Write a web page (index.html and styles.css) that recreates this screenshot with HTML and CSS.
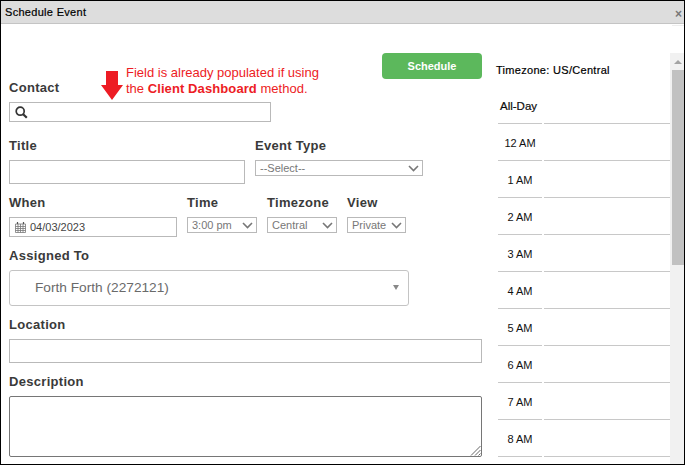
FILE: index.html
```html
<!DOCTYPE html>
<html lang="en">
<head>
<meta charset="utf-8">
<title>Schedule Event</title>
<link rel="stylesheet" href="styles.css">
</head>
<body>
<div class="dialog">
  <header class="titlebar">
    <span class="title">Schedule Event</span>
    <span class="close">×</span>
  </header>
  <div class="body">
    <span class="mark"></span>
    <form class="form">
      <div class="actions"><button type="button" class="btn">Schedule</button></div>
      <div class="contact">
        <label class="lbl">Contact</label>
        <div class="search">
          <svg class="search-ic" width="13" height="13" viewBox="0 0 13 13"><circle cx="5.200" cy="5.200" r="4" fill="none" stroke="#333" stroke-width="1.700"/><path d="M8.200 8.200l3.600 3.600" stroke="#333" stroke-width="2.200"/></svg>
        </div>
        <div class="note">
          <svg class="arrow" width="22" height="29" viewBox="0 0 22 29"><path d="M5 0h12v14h5L11 29 0 14h5z" fill="#ed1c24"/></svg>
          <p class="note-text">Field is already populated if using<br>the <b>Client Dashboard</b> method.</p>
        </div>
      </div>
      <div class="row row-title">
        <div class="f-title"><label class="lbl">Title</label><div class="input h24"></div></div>
        <div class="f-type"><label class="lbl">Event Type</label><div class="sel w168">--Select--<svg class="chev" width="11" height="7" viewBox="0 0 11 7"><path d="M1 1l4.500 4.500L10 1" fill="none" stroke="#777" stroke-width="1.600"/></svg></div></div>
      </div>
      <div class="row row-when">
        <div class="f-when"><label class="lbl">When</label>
          <div class="input date">
            <svg width="11" height="11" viewBox="0 0 11 11"><path d="M.5 2h10v8.500H.5zM.5 4.500h10M.5 6.500h10M.5 8.500h10M3 2v8.500M5.500 2v8.500M8 2v8.500" fill="none" stroke="#777" stroke-width=".8"/><path d="M2.500 0v2M8.500 0v2" stroke="#555" stroke-width="1.200"/></svg>
            <span>04/03/2023</span>
          </div>
        </div>
        <div class="f-time"><label class="lbl">Time</label><div class="sel w70">3:00 pm<svg class="chev" width="11" height="7" viewBox="0 0 11 7"><path d="M1 1l4.500 4.500L10 1" fill="none" stroke="#777" stroke-width="1.600"/></svg></div></div>
        <div class="f-tz"><label class="lbl">Timezone</label><div class="sel w70">Central<svg class="chev" width="11" height="7" viewBox="0 0 11 7"><path d="M1 1l4.500 4.500L10 1" fill="none" stroke="#777" stroke-width="1.600"/></svg></div></div>
        <div class="f-view"><label class="lbl">View</label><div class="sel w59">Private<svg class="chev" width="11" height="7" viewBox="0 0 11 7"><path d="M1 1l4.500 4.500L10 1" fill="none" stroke="#777" stroke-width="1.600"/></svg></div></div>
      </div>
      <div class="f-assign">
        <label class="lbl">Assigned To</label>
        <div class="assign"><span>Forth Forth (2272121)</span><i class="caret"></i></div>
      </div>
      <div class="f-loc"><label class="lbl">Location</label><div class="input h24 full"></div></div>
      <div class="f-desc"><label class="lbl">Description</label>
        <div class="area">
          <svg class="grip" width="11" height="11" viewBox="0 0 11 11"><path d="M1 10.500L10.500 1M5 10.500L10.500 5M8.500 10.500l2-2" stroke="#666" stroke-width="1"/></svg>
        </div>
      </div>
    </form>
    <aside class="cal">
      <div class="tz">Timezone: US/Central</div>
      <div class="cal-rows">
        <div class="slot allday"><span class="hour">All-Day</span><span class="cell"></span></div>
        <div class="slot"><span class="hour">12 AM</span><span class="cell"></span></div>
        <div class="slot"><span class="hour">1 AM</span><span class="cell"></span></div>
        <div class="slot"><span class="hour">2 AM</span><span class="cell"></span></div>
        <div class="slot"><span class="hour">3 AM</span><span class="cell"></span></div>
        <div class="slot"><span class="hour">4 AM</span><span class="cell"></span></div>
        <div class="slot"><span class="hour">5 AM</span><span class="cell"></span></div>
        <div class="slot"><span class="hour">6 AM</span><span class="cell"></span></div>
        <div class="slot"><span class="hour">7 AM</span><span class="cell"></span></div>
        <div class="slot"><span class="hour">8 AM</span><span class="cell"></span></div>
      </div>
    </aside>
    <div class="scrollbar"><span class="up"></span><span class="thumb"></span></div>
  </div>
</div>
</body>
</html>
```
FILE: styles.css
```css
* { box-sizing: border-box; }
html, body { margin: 0; padding: 0; height: 100%; overflow: hidden; background: #fff; }
body { font-family: "Liberation Sans", Arial, sans-serif; color: #000; }
.dialog { width: 685px; height: 465px; border: 1px solid #000; display: flex; flex-direction: column; overflow: hidden; }
.titlebar { height: 23px; flex: none; background: #dddddd; border-bottom: 1px solid #c4c4c4; display: flex; align-items: center; justify-content: space-between; padding: 0 0 0 4px; }
.title { font-size: 11px; color: #000; letter-spacing: .3px; -webkit-text-stroke: .2px #000; }
.close { font-size: 12px; font-weight: bold; color: #777; margin-right: 2px; margin-top: 3px; }
.body { flex: 1; display: flex; min-height: 0; position: relative; }
.mark { position: absolute; right: 0; top: 1px; width: 12px; height: 1px; background: #eee; }
.form { width: 495px; flex: none; padding: 29px 0 0 8px; }
.actions { display: flex; justify-content: flex-end; width: 473px; height: 26px; }
.btn { width: 100px; height: 26px; border: 0; border-radius: 4px; background: #5cb85c; color: #fff; font: bold 11px "Liberation Sans", Arial, sans-serif; padding: 0 0 1px; }
.lbl { display: block; font-size: 13px; font-weight: bold; color: #3a3a3a; line-height: 15px; letter-spacing: .3px; }
.contact { position: relative; margin-top: 1px; }
.search { width: 262px; height: 20px; margin-top: 7px; border: 1px solid #b9b9b9; display: flex; align-items: center; padding-left: 5px; }
.note { position: absolute; left: 92px; top: -15px; display: flex; gap: 3px; }
.arrow { margin-top: 6px; }
.note-text { margin: 0; font-size: 13px; line-height: 16px; color: #ed1c24; }
.note-text b { letter-spacing: .1px; }
.row { display: flex; }
.row-title { margin-top: 16px; }
.f-title { width: 246px; }
.f-type { width: 168px; }
.input { border: 1px solid #b9b9b9; background: #fff; }
.h24 { height: 24px; margin-top: 7px; width: 236px; }
.full { width: 473px; }
.sel { height: 16px; border: 1px solid #b9b9b9; font-size: 11px; color: #777; display: flex; align-items: center; justify-content: space-between; padding: 0 3px 0 4px; }
.w168 { width: 168px; margin-top: 7px; }
.w70 { width: 70px; margin-top: 7px; }
.w59 { width: 59px; margin-top: 7px; }
.row-when { margin-top: 11px; }
.f-when { width: 178px; }
.f-time, .f-tz { width: 80px; }
.date { width: 168px; height: 20px; margin-top: 7px; display: flex; align-items: center; gap: 4px; padding-left: 5px; font-size: 11px; color: #444; }
.f-assign { margin-top: 11px; }
.assign { width: 400px; height: 36px; margin-top: 7px; border: 1px solid #c4c4c4; border-radius: 3px; display: flex; align-items: center; justify-content: space-between; padding: 0 9px 2px 25px; font-size: 13.700px; color: #6a6a6a; }
.caret { width: 0; height: 0; border-left: 3.500px solid transparent; border-right: 3.500px solid transparent; border-top: 5px solid #888; }
.f-loc { margin-top: 11px; }
.f-desc { margin-top: 11px; }
.area { position: relative; width: 473px; height: 61px; margin-top: 7px; border: 1px solid #767676; border-radius: 2px; }
.grip { position: absolute; right: 0; bottom: 0; }
.cal { width: 175px; flex: none; padding-top: 40px; }
.tz { font-size: 11px; color: #000; line-height: 13px; letter-spacing: .3px; -webkit-text-stroke: .2px #000; }
.cal-rows { padding-left: 2px; }
.slot { display: flex; gap: 2px; height: 37px; align-items: stretch; }
.allday { height: 47px; }
.hour { width: 44px; flex: none; border-bottom: 1px solid #c8c8c8; font-size: 11px; color: #111; display: flex; align-items: center; justify-content: center; padding-top: 2px; }
.allday .hour { font-size: 11.500px; justify-content: flex-start; padding: 12px 0 0 2px; -webkit-text-stroke: .2px #000; }
.cell { flex: 1; border-bottom: 1px solid #c8c8c8; }
.scrollbar { position: absolute; right: 0; top: 29px; bottom: 0; width: 14px; background: #f1f1f1; display: flex; flex-direction: column; align-items: center; }
.up { width: 0; height: 0; margin: 7px 0 0 2px; border-left: 4px solid transparent; border-right: 4px solid transparent; border-bottom: 4px solid #a3a3a3; }
.thumb { width: 12px; align-self: flex-end; height: 195px; margin-top: 6px; background: #c1c1c1; }
```
